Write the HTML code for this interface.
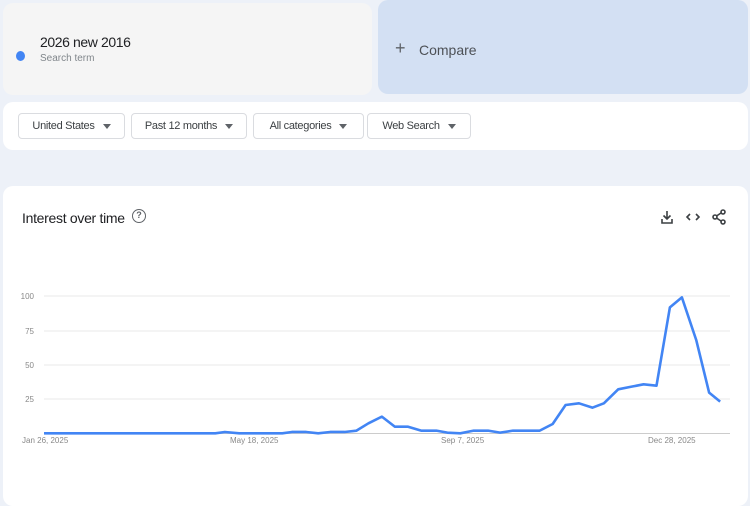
<!DOCTYPE html>
<html><head><style>
*{margin:0;padding:0;box-sizing:border-box}
body{width:750px;height:500px;overflow:hidden;background:#edf1f8;font-family:"Liberation Sans",sans-serif;position:relative}
.abs{position:absolute}
.card1{left:3px;top:3px;width:369px;height:92px;background:#f5f5f5;border-radius:10px}
.card2{left:378px;top:0;width:370px;height:94px;background:#d3e0f3;border-radius:10px}
.filt{left:3px;top:102px;width:745px;height:48px;background:#fff;border-radius:10px}
.btn{position:absolute;top:11px;height:26px;border:1px solid #dadce0;border-radius:4px;font-size:11px;color:#3c4043;display:flex;align-items:center;justify-content:center;letter-spacing:-0.3px}
.btn:after{content:"";border-left:4px solid transparent;border-right:4px solid transparent;border-top:5px solid #5f6368;margin-left:8px}
.chart{left:3px;top:186px;width:745px;height:320px;background:#fff;border-radius:10px}
.yl{position:absolute;font-size:8px;color:#888;right:716px}
.xl{position:absolute;font-size:8px;color:#888;top:436px}
</style></head><body>
<div class="abs card1"></div>
<div class="abs" style="left:16px;top:51px;width:9px;height:10px;border-radius:50%;background:#4285f4"></div>
<div class="abs" style="left:40px;top:34px;font-size:14px;color:#202124;letter-spacing:-0.4px">2026 new 2016</div>
<div class="abs" style="left:40px;top:53px;font-size:10px;color:#80868b">Search term</div>
<div class="abs card2"></div>
<div class="abs" style="left:395px;top:39px;font-size:18px;color:#5f6368;line-height:18px">+</div>
<div class="abs" style="left:419px;top:42px;font-size:14px;color:#4d5156">Compare</div>
<div class="abs filt">
<div class="btn" style="left:15px;width:107px">United States</div>
<div class="btn" style="left:128px;width:116px">Past 12 months</div>
<div class="btn" style="left:250px;width:111px">All categories</div>
<div class="btn" style="left:364px;width:104px">Web Search</div>
</div>
<div class="abs chart"></div>
<div class="abs" style="left:22px;top:210px;font-size:14px;color:#202124;letter-spacing:-0.3px">Interest over time</div>
<div class="abs" style="left:132px;top:209px;width:14px;height:14px;border:1.5px solid #5f6368;border-radius:50%;font-size:9px;color:#5f6368;text-align:center;line-height:11px;font-weight:bold">?</div>
<svg class="abs" style="left:0;top:0" width="750" height="500">
<g stroke="#3c4043" stroke-width="1.6" fill="none">
<path d="M667 211v8M663.5 215.5l3.5 3.5 3.5-3.5M662 219v4h10v-4"/>
<path d="M690 214l-3 3 3 3M696 214l3 3-3 3"/>
<circle cx="723" cy="212" r="2"/><circle cx="715" cy="217" r="2"/><circle cx="723" cy="222" r="2"/>
<path d="M721 213l-4.5 3M721 221l-4.5-3"/>
</g>
<g stroke="#e8e8e8" stroke-width="1">
<line x1="44" y1="296" x2="730" y2="296"/><line x1="44" y1="331" x2="730" y2="331"/>
<line x1="44" y1="365" x2="730" y2="365"/><line x1="44" y1="399" x2="730" y2="399"/>
</g>
<line x1="44" y1="433.5" x2="730" y2="433.5" stroke="#ccc"/>
<g transform="translate(0,280) scale(0.4785,0.3333)">
<polyline vector-effect="non-scaling-stroke" fill="none" stroke="#4285f4" stroke-width="2.6" stroke-linejoin="round" points="92,460 450,460 470,456 500,460 590,460 610,456 640,456 665,460 690,456 720,456 745,452 770,430 798,410 825,440 852,440 880,452 912,452 935,458 962,460 990,452 1020,452 1045,458 1072,452 1128,452 1155,432 1182,375 1210,370 1238,383 1262,370 1292,328 1320,320 1345,313 1372,317 1400,82 1425,52 1455,180 1482,338 1505,365"/>
</g>
</svg>
<div class="yl" style="top:292px">100</div>
<div class="yl" style="top:327px">75</div>
<div class="yl" style="top:361px">50</div>
<div class="yl" style="top:395px">25</div>
<div class="xl" style="left:22px">Jan 26, 2025</div>
<div class="xl" style="left:230px">May 18, 2025</div>
<div class="xl" style="left:441px">Sep 7, 2025</div>
<div class="xl" style="left:648px">Dec 28, 2025</div>
</body></html>
